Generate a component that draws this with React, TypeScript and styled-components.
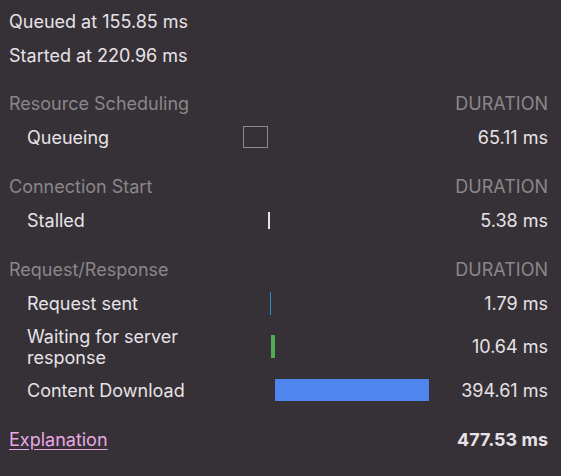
import React from "react";
import styled, { createGlobalStyle } from "styled-components";

const GlobalStyle = createGlobalStyle`
  html, body {
    margin: 0;
    padding: 0;
    background: #363136;
  }
  body {
    font-family: Inter, "Noto Sans", sans-serif;
    font-size: 18px;
    color: #e8e2e8;
    -webkit-font-smoothing: antialiased;
  }
`;

const Panel = styled.div`
  width: 561px;
  height: 476px;
  box-sizing: border-box;
  padding: 5px 13px 0 9px;
  background: #363136;
`;

const Info = styled.div`
  line-height: 34px;
`;

const Section = styled.div<{ $first?: boolean }>`
  margin-top: ${({ $first }) => ($first ? "13px" : "15px")};
`;

const Row = styled.div`
  display: grid;
  grid-template-columns: 234px 187px 1fr;
  align-items: center;
`;

const HeaderRow = styled(Row)`
  height: 34px;
  color: #8b868b;
`;

const Duration = styled.div<{ $bold?: boolean }>`
  text-align: right;
  font-weight: ${({ $bold }) => ($bold ? 700 : 400)};
`;

const HeaderDuration = styled(Duration)`
  text-transform: uppercase;
`;

const DataRow = styled(Row)`
  padding: 5.5px 0;
  line-height: 21px;
`;

const Label = styled.div`
  padding-left: 18px;
  padding-right: 30px;
`;

const Track = styled.div`
  position: relative;
  height: 23px;
`;

const Bar = styled.div<{ $kind: string }>`
  position: absolute;
  top: 0;
  bottom: 0;
  box-sizing: border-box;
  ${({ $kind }) => {
    switch ($kind) {
      case "queueing":
        return "border: 1px solid #8e898e; top: 0; bottom: 1px;";
      case "stalled":
        return "background: #e8e2e8; top: 3px; bottom: 3px;";
      case "sent":
        return "background: #2b8fc2;";
      case "waiting":
        return "background: #4cae50;";
      default:
        return "background: #4f86ee; bottom: 1px;";
    }
  }}
`;

const Footer = styled(Row)`
  margin-top: 15px;
  height: 34px;
`;

const Link = styled.a`
  color: #e9a8e6;
  text-decoration: underline;
  text-underline-offset: 3px;
  cursor: pointer;
`;

interface Timing {
  label: string;
  kind: string;
  left: number;
  width: number;
  ms: string;
}

interface Group {
  title: string;
  rows: Timing[];
}

const groups: Group[] = [
  {
    title: "Resource Scheduling",
    rows: [{ label: "Queueing", kind: "queueing", left: 0, width: 25, ms: "65.11 ms" }],
  },
  {
    title: "Connection Start",
    rows: [{ label: "Stalled", kind: "stalled", left: 25, width: 2, ms: "5.38 ms" }],
  },
  {
    title: "Request/Response",
    rows: [
      { label: "Request sent", kind: "sent", left: 27, width: 1, ms: "1.79 ms" },
      { label: "Waiting for server response", kind: "waiting", left: 28, width: 4, ms: "10.64 ms" },
      { label: "Content Download", kind: "download", left: 32, width: 154, ms: "394.61 ms" },
    ],
  },
];

const App = () => {
  return (
    <>
      <GlobalStyle />
      <Panel>
        <Info>Queued at 155.85 ms</Info>
        <Info>Started at 220.96 ms</Info>
        {groups.map((group, i) => (
          <Section key={group.title} $first={i === 0}>
            <HeaderRow>
              <div>{group.title}</div>
              <div />
              <HeaderDuration>Duration</HeaderDuration>
            </HeaderRow>
            {group.rows.map((row) => (
              <DataRow key={row.label}>
                <Label>{row.label}</Label>
                <Track>
                  <Bar $kind={row.kind} style={{ left: row.left, width: row.width }} />
                </Track>
                <Duration>{row.ms}</Duration>
              </DataRow>
            ))}
          </Section>
        ))}
        <Footer>
          <div>
            <Link>Explanation</Link>
          </div>
          <div />
          <Duration $bold>477.53 ms</Duration>
        </Footer>
      </Panel>
    </>
  );
};

export default App;
